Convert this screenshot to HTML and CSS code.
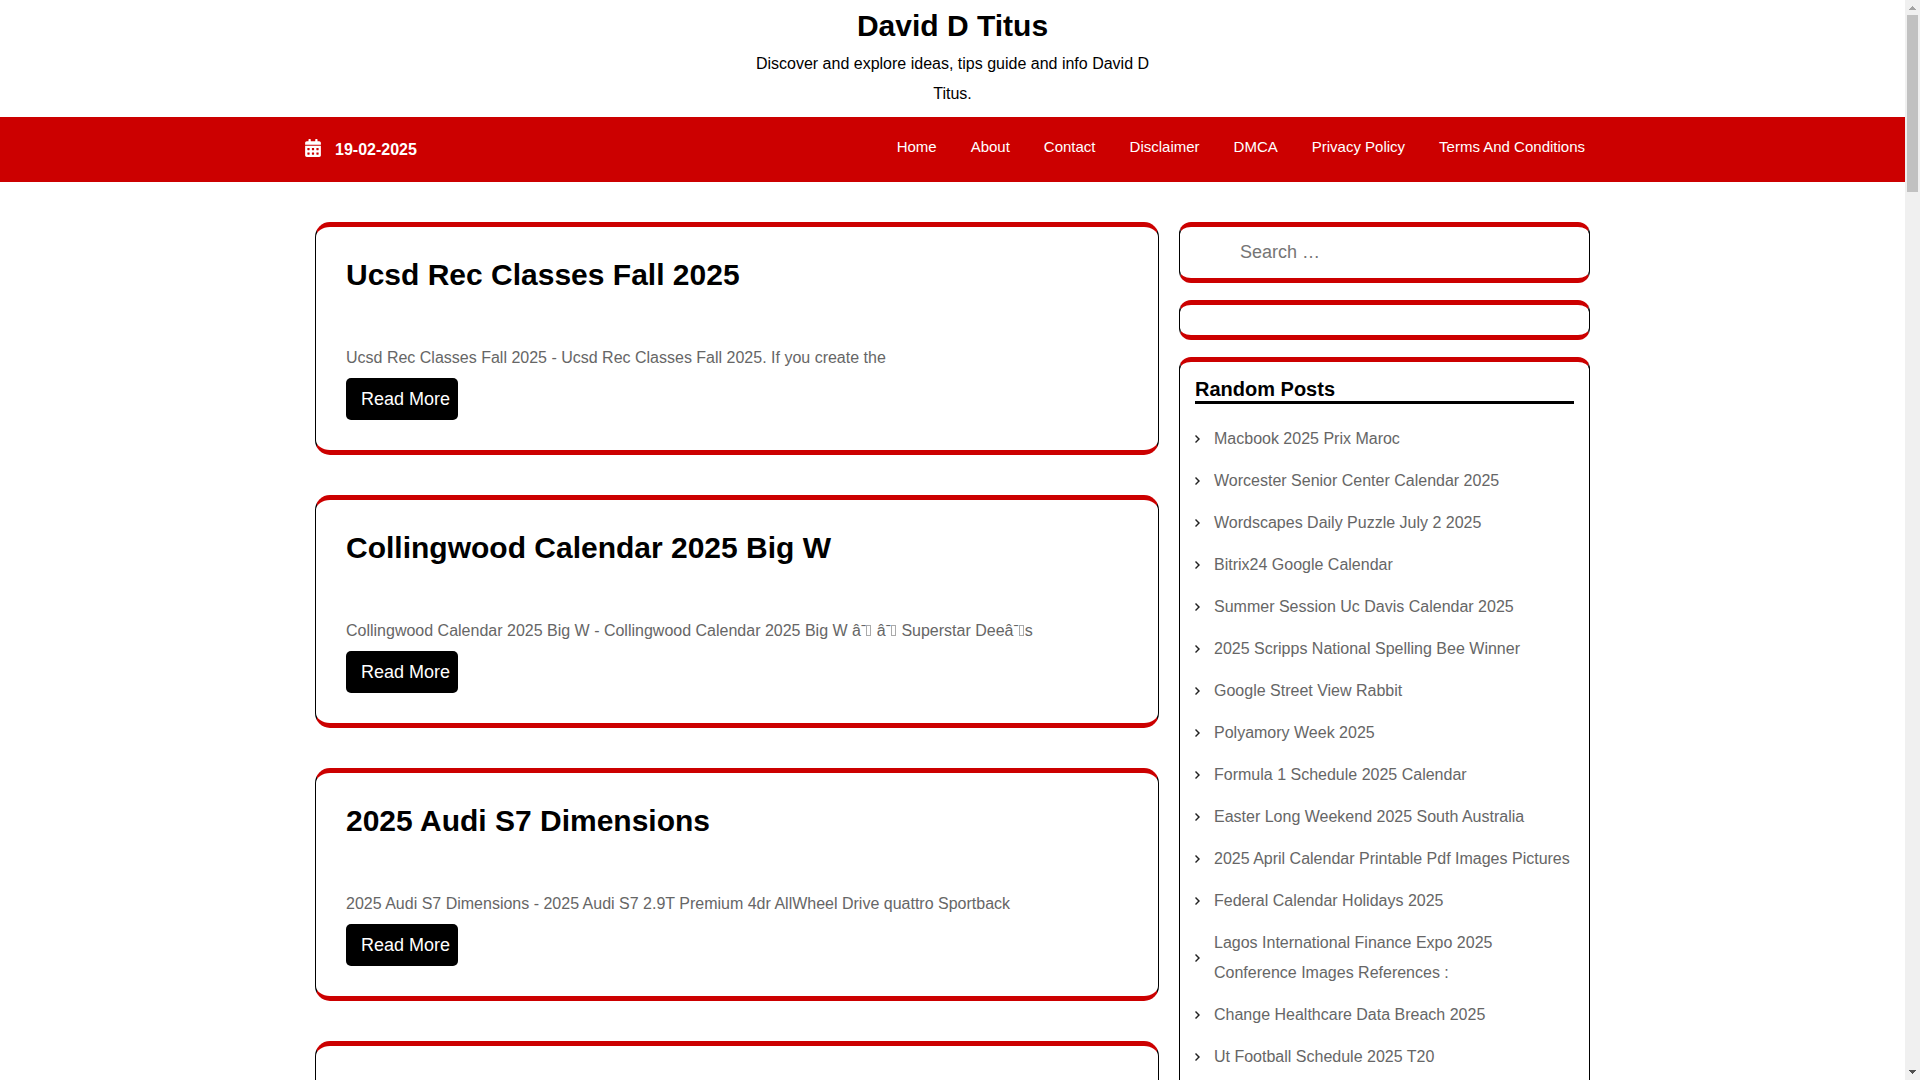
FILE: index.html
```
<!DOCTYPE html>
<html lang="en">
<head>
<meta charset="utf-8">
<title>David D Titus</title>
<link rel="stylesheet" href="styles.css">
</head>
<body>
<div class="page">
  <header>
    <div class="branding">
      <h1 class="site-title"><a href="#">David D Titus</a></h1>
      <p class="tagline">Discover and explore ideas, tips guide and info David D Titus.</p>
    </div>
    <div class="topbar">
      <div class="container topbar-inner">
        <div class="date">
          <svg class="date-icon" viewBox="0 0 448 512" aria-hidden="true"><path fill="currentColor" d="M0 464c0 26.500 21.500 48 48 48h352c26.500 0 48-21.500 48-48V192H0v272zm320-196c0-6.600 5.400-12 12-12h40c6.600 0 12 5.400 12 12v40c0 6.600-5.400 12-12 12h-40c-6.600 0-12-5.400-12-12v-40zm0 128c0-6.600 5.400-12 12-12h40c6.600 0 12 5.400 12 12v40c0 6.600-5.400 12-12 12h-40c-6.600 0-12-5.400-12-12v-40zM192 268c0-6.600 5.400-12 12-12h40c6.600 0 12 5.400 12 12v40c0 6.600-5.400 12-12 12h-40c-6.600 0-12-5.400-12-12v-40zm0 128c0-6.600 5.400-12 12-12h40c6.600 0 12 5.400 12 12v40c0 6.600-5.400 12-12 12h-40c-6.600 0-12-5.400-12-12v-40zM64 268c0-6.600 5.400-12 12-12h40c6.600 0 12 5.400 12 12v40c0 6.600-5.400 12-12 12H76c-6.600 0-12-5.400-12-12v-40zm0 128c0-6.600 5.400-12 12-12h40c6.600 0 12 5.400 12 12v40c0 6.600-5.400 12-12 12H76c-6.600 0-12-5.400-12-12v-40zM400 64h-48V16c0-8.800-7.200-16-16-16h-32c-8.800 0-16 7.200-16 16v48H160V16c0-8.800-7.200-16-16-16h-32c-8.800 0-16 7.200-16 16v48H48C21.500 64 0 85.500 0 112v48h448v-48c0-26.500-21.500-48-48-48z"/></svg>
          <span>19-02-2025</span>
        </div>
        <nav class="menu">
          <a href="#">Home</a>
          <a href="#">About</a>
          <a href="#">Contact</a>
          <a href="#">Disclaimer</a>
          <a href="#">DMCA</a>
          <a href="#">Privacy Policy</a>
          <a href="#">Terms And Conditions</a>
        </nav>
      </div>
    </div>
  </header>
  <div class="container columns">
    <main class="posts">
      <article class="post">
        <h2><a href="#">Ucsd Rec Classes Fall 2025</a></h2>
        <p>Ucsd Rec Classes Fall 2025 - Ucsd Rec Classes Fall 2025. If you create the</p>
        <a class="read-more" href="#">Read More</a>
      </article>
      <article class="post">
        <h2><a href="#">Collingwood Calendar 2025 Big W</a></h2>
        <p>Collingwood Calendar 2025 Big W - Collingwood Calendar 2025 Big W âˉ<span class="missing"></span> âˉ<span class="missing"></span> Superstar Deeâˉ<span class="missing"></span>s</p>
        <a class="read-more" href="#">Read More</a>
      </article>
      <article class="post">
        <h2><a href="#">2025 Audi S7 Dimensions</a></h2>
        <p>2025 Audi S7 Dimensions - 2025 Audi S7 2.9T Premium 4dr AllWheel Drive quattro Sportback</p>
        <a class="read-more" href="#">Read More</a>
      </article>
      <article class="post post-next"></article>
    </main>
    <aside class="sidebar">
      <form class="widget search" role="search">
        <input type="search" placeholder="Search …" aria-label="Search for:">
      </form>
      <div class="widget blank"></div>
      <section class="widget random">
        <h3>Random Posts</h3>
        <ul>
          <li><a href="#">Macbook 2025 Prix Maroc</a></li>
          <li><a href="#">Worcester Senior Center Calendar 2025</a></li>
          <li><a href="#">Wordscapes Daily Puzzle July 2 2025</a></li>
          <li><a href="#">Bitrix24 Google Calendar</a></li>
          <li><a href="#">Summer Session Uc Davis Calendar 2025</a></li>
          <li><a href="#">2025 Scripps National Spelling Bee Winner</a></li>
          <li><a href="#">Google Street View Rabbit</a></li>
          <li><a href="#">Polyamory Week 2025</a></li>
          <li><a href="#">Formula 1 Schedule 2025 Calendar</a></li>
          <li><a href="#">Easter Long Weekend 2025 South Australia</a></li>
          <li><a href="#">2025 April Calendar Printable Pdf Images Pictures</a></li>
          <li><a href="#">Federal Calendar Holidays 2025</a></li>
          <li><a href="#">Lagos International Finance Expo 2025 Conference Images References :</a></li>
          <li><a href="#">Change Healthcare Data Breach 2025</a></li>
          <li><a href="#">Ut Football Schedule 2025 T20</a></li>
        </ul>
      </section>
    </aside>
  </div>
</div>
<div class="scrollbar" aria-hidden="true">
  <svg class="arrow arrow-up" viewBox="0 0 7 4" shape-rendering="crispEdges"><path d="M3 0h1v1h1v1h1v1h1v1H0V3h1V2h1V1h1z"/></svg>
  <div class="track"><div class="thumb"></div></div>
  <svg class="arrow arrow-down" viewBox="0 0 7 4" shape-rendering="crispEdges"><path d="M0 0h7v1H6v1H5v1H4v1H3V3H2V2H1V1H0z"/></svg>
</div>
</body>
</html>
```
FILE: styles.css
```
* {
  box-sizing: border-box;
}

body {
  margin: 0;
  height: 100vh;
  display: grid;
  grid-template-columns: 1fr 15px;
  overflow: hidden;
  background: #fff;
  color: #000;
  font: 16px/30px "Liberation Sans", Arial, sans-serif;
}

h1, h2, h3, p, ul {
  margin: 0;
  padding: 0;
}

a {
  color: inherit;
  text-decoration: none;
}

.page {
  height: 100vh;
  overflow: hidden;
}

.container {
  width: 100%;
  max-width: 1319px;
  margin: 0 auto;
  padding: 0 12px;
}

/* Header */
.branding {
  max-width: 416px;
  margin: 0 auto;
  padding: 8px 0;
  text-align: center;
}

.site-title {
  font-size: 30px;
  line-height: 36px;
  margin-bottom: 5px;
}

.topbar {
  background: #c00;
  color: #fff;
}

.topbar-inner {
  display: flex;
  justify-content: space-between;
  align-items: flex-start;
  min-height: 65px;
}

.date {
  display: flex;
  align-items: center;
  gap: 14px;
  padding-top: 18px;
  font-weight: bold;
}

.date-icon {
  width: 16px;
  height: 18px;
  margin-bottom: 4px;
}

.menu {
  display: flex;
  flex-wrap: wrap;
  gap: 0 34px;
  padding: 15px 15px 0 0;
  font-size: 15px;
}

/* Columns */
.columns {
  display: grid;
  grid-template-columns: minmax(0, 1fr) 431px;
  padding-top: 40px;
}

.posts {
  padding: 0 10px;
}

.post {
  margin-bottom: 40px;
  padding: 30px;
  border: solid;
  border-width: 5px 1px;
  border-color: #c00 #000;
  border-radius: 15px;
}

.post h2 {
  margin-bottom: 50px;
  font-size: 30px;
  line-height: 36px;
}

.post p {
  color: #666;
  margin-bottom: 5px;
}

/* Box shown for a character that has no glyph */
.missing {
  display: inline-block;
  width: 5px;
  height: 11px;
  margin-right: 1px;
  border: 1px solid #aaa;
  vertical-align: baseline;
}

.post-next {
  height: 233px;
}

.read-more {
  display: block;
  width: fit-content;
  padding: 6px 8px 6px 15px;
  border-radius: 5px;
  background: #000;
  color: #fff;
  font-size: 18px;
}

/* Sidebar */
.sidebar {
  padding: 0 10px;
}

.widget {
  margin-bottom: 17px;
  padding: 15px;
  border: solid;
  border-width: 5px 1px;
  border-color: #c00 #000;
  border-radius: 12px;
}

.search {
  padding: 10px 15px 11px 60px;
}

.search input {
  display: block;
  width: 100%;
  height: 30px;
  padding: 0;
  border: 0;
  background: transparent;
  font: 18px/30px "Liberation Sans", Arial, sans-serif;
}

.search input::placeholder {
  color: #757575;
}

.random h3 {
  margin-bottom: 20px;
  border-bottom: 3px solid #000;
  font-size: 20px;
  line-height: 24px;
}

.random ul {
  list-style: none;
}

.random li {
  display: flex;
  align-items: center;
  gap: 14px;
  margin-bottom: 12px;
  color: #666;
}

.random li::before {
  content: "";
  flex: none;
  width: 5px;
  height: 8px;
  background: #222;
  clip-path: polygon(0 1px, 1px 0, 5px 4px, 1px 8px, 0 7px, 3px 4px);
}

/* Window scrollbar */
.scrollbar {
  display: flex;
  flex-direction: column;
  align-items: center;
  padding: 6px 0;
  background: #f0f0f0;
}

.arrow {
  flex: none;
  width: 7px;
  height: 4px;
}

.arrow-up {
  fill: #a3a3a3;
}

.arrow-down {
  fill: #505050;
}

.track {
  flex: 1;
  width: 11px;
  padding-top: 5px;
}

.thumb {
  height: 177px;
  background: #c1c1c1;
}
```
